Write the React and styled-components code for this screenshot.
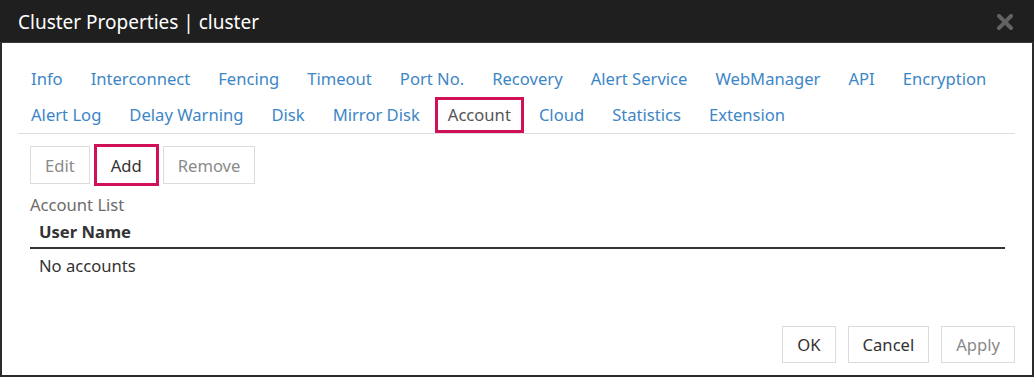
import React from 'react'
import styled, { createGlobalStyle } from 'styled-components'

const GlobalStyle = createGlobalStyle`
  html, body {
    margin: 0;
    padding: 0;
    background: #ffffff;
  }
  body {
    font-family: 'Noto Sans', 'Open Sans', sans-serif;
  }
  * {
    box-sizing: border-box;
  }
`

const MARK = '#d1105a'

const Dialog = styled.div`
  width: 1034px;
  height: 377px;
  display: flex;
  flex-direction: column;
  border: 2px solid #2b2b2b;
  border-top: none;
  background: #ffffff;
`

const TitleBar = styled.div`
  height: 43px;
  flex-shrink: 0;
  margin: 0 -2px;
  padding: 1px 20px 0 18px;
  display: flex;
  align-items: center;
  justify-content: space-between;
  background: #1f1f1f;
  color: #ffffff;
  font-size: 19px;
  border-bottom: 1px solid #3a3a3a;
`

const CloseButton = styled.button`
  width: 18px;
  height: 18px;
  padding: 0;
  border: none;
  background: transparent;
  display: flex;
  align-items: center;
  justify-content: center;
`

const Body = styled.div`
  flex: 1;
  display: flex;
  flex-direction: column;
  padding: 18px 17px 12px 16px;
`

const TabList = styled.ul`
  list-style: none;
  margin: 0;
  padding: 0;
  display: flex;
  flex-wrap: wrap;
  border-bottom: 1px solid #dddddd;
`

const Tab = styled.li`
  margin-right: 2px;
  padding: 7px 12px;
  line-height: 20px;
  font-size: 16.6px;
  border: 1px solid transparent;
  color: ${p => (p.$active ? '#555555' : '#3d86c6')};
  outline: ${p => (p.$active ? `3px solid ${MARK}` : 'none')};
  outline-offset: -3px;
  cursor: pointer;
  white-space: nowrap;
`

const Content = styled.div`
  padding: 12px 12px 0 12px;
  display: flex;
  flex-direction: column;
`

const Toolbar = styled.div`
  display: flex;
  gap: 6px;
`

const Button = styled.button`
  height: 38px;
  padding: 0 14px;
  font-family: inherit;
  font-size: 16.6px;
  background: #ffffff;
  border: 1px solid #dcdcdc;
  color: ${p => (p.$disabled ? '#8a8a8a' : '#333333')};
  outline: ${p => (p.$marked ? `3px solid ${MARK}` : 'none')};
  outline-offset: -1px;
  cursor: pointer;
`

const Label = styled.div`
  margin-top: 9px;
  font-size: 16.6px;
  line-height: 24px;
  color: #6b6b6b;
`

const Table = styled.table`
  width: 975px;
  border-collapse: collapse;
  font-size: 16.6px;
  color: #333333;
`

const HeadCell = styled.th`
  text-align: left;
  font-weight: 700;
  padding: 4px 9px 4px;
  line-height: 22px;
  border-bottom: 2px solid #333333;
`

const Cell = styled.td`
  padding: 6px 9px;
  line-height: 22px;
`

const Footer = styled.div`
  margin-top: auto;
  display: flex;
  justify-content: flex-end;
  gap: 12px;
`

const FooterButton = styled(Button)`
  height: 37px;
  padding: 0 14px;
`

const rowOne = ['Info', 'Interconnect', 'Fencing', 'Timeout', 'Port No.', 'Recovery', 'Alert Service', 'WebManager', 'API', 'Encryption']
const rowTwo = ['Alert Log', 'Delay Warning', 'Disk', 'Mirror Disk', 'Account', 'Cloud', 'Statistics', 'Extension']

const App = () => {
  const activeTab = 'Account'

  return (
    <>
      <GlobalStyle />
      <Dialog>
        <TitleBar>
          <span>Cluster Properties | cluster</span>
          <CloseButton aria-label="Close">
            <svg width="16" height="16" viewBox="0 0 16 16">
              <path d="M2 2 L14 14 M14 2 L2 14" stroke="#626262" strokeWidth="4" strokeLinecap="square" />
            </svg>
          </CloseButton>
        </TitleBar>
        <Body>
          <TabList>
            {rowOne.map(name => (
              <Tab key={name} $active={name === activeTab}>{name}</Tab>
            ))}
            <div style={{ flexBasis: '100%', height: 0 }} />
            {rowTwo.map(name => (
              <Tab key={name} $active={name === activeTab}>{name}</Tab>
            ))}
          </TabList>
          <Content>
            <Toolbar>
              <Button $disabled>Edit</Button>
              <Button $marked>Add</Button>
              <Button $disabled>Remove</Button>
            </Toolbar>
            <Label>Account List</Label>
            <Table>
              <thead>
                <tr>
                  <HeadCell>User Name</HeadCell>
                </tr>
              </thead>
              <tbody>
                <tr>
                  <Cell>No accounts</Cell>
                </tr>
              </tbody>
            </Table>
          </Content>
          <Footer>
            <FooterButton>OK</FooterButton>
            <FooterButton>Cancel</FooterButton>
            <FooterButton $disabled>Apply</FooterButton>
          </Footer>
        </Body>
      </Dialog>
    </>
  )
}

export default App
